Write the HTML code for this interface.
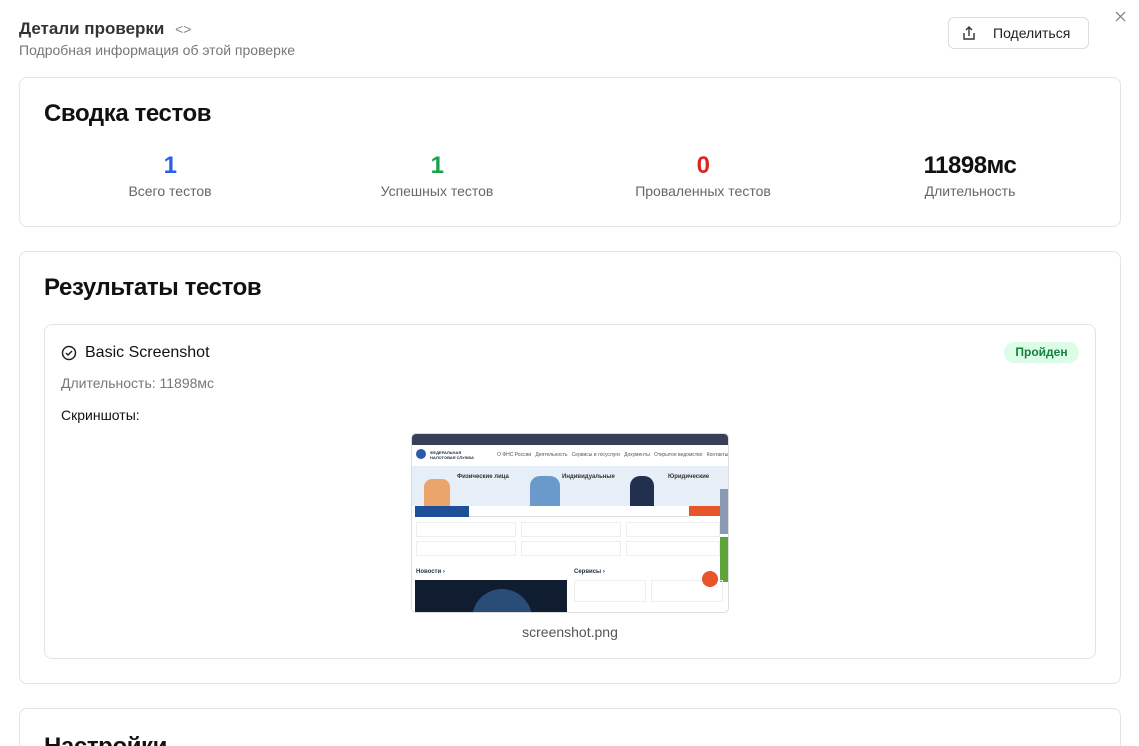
<!DOCTYPE html>
<html style="height:746px;overflow:hidden"><head><meta charset="utf-8"><style>
*{box-sizing:border-box;margin:0;padding:0}
body{width:1139px;height:746px;overflow:hidden;background:#fff;font-family:"Liberation Sans",sans-serif;color:#111;position:relative}
.abs{position:absolute}
.card{position:absolute;left:19px;width:1102px;border:1px solid #e4e4e7;border-radius:8px;background:#fff}
.stat{position:absolute;top:151px;width:250px;text-align:center}
.stat b{display:block;font-size:24px;font-weight:700;line-height:30px;letter-spacing:-0.5px}
.stat span{display:block;font-size:14px;color:#666;margin-top:2px}
.t{font-size:5px;color:#556;position:absolute;white-space:nowrap}
h2{position:absolute;font-size:24px;font-weight:700;letter-spacing:-0.4px}
</style></head><body>
<div class="abs" style="left:19px;top:19px;font-size:17px;font-weight:700;color:#333">Детали проверки <span style="font-weight:400;color:#888;font-size:14px;margin-left:6px">&lt;&gt;</span></div>
<div class="abs" style="left:19px;top:42px;font-size:14px;color:#777">Подробная информация об этой проверке</div>
<div class="abs" style="left:948px;top:17px;width:141px;height:32px;border:1px solid #ddd;border-radius:6px;font-size:14px;color:#222;line-height:30px;padding-left:44px">Поделиться
<svg class="abs" style="left:13px;top:8px" width="14" height="15" viewBox="0 0 14 15" fill="none" stroke="#333" stroke-width="1.4"><path d="M7 10V1M4 4l3-3 3 3M2 7v6h10V7"/></svg></div>
<svg class="abs" style="left:1115px;top:11px" width="11" height="11" viewBox="0 0 11 11" stroke="#777" stroke-width="1.2"><path d="M1 1l9 9M10 1l-9 9"/></svg>

<div class="card" style="top:77px;height:150px"></div>
<h2 style="left:44px;top:100px">Сводка тестов</h2>
<div class="stat" style="left:45px"><b style="color:#2563eb">1</b><span>Всего тестов</span></div>
<div class="stat" style="left:312px"><b style="color:#16a34a">1</b><span>Успешных тестов</span></div>
<div class="stat" style="left:578px"><b style="color:#dc2626">0</b><span>Проваленных тестов</span></div>
<div class="stat" style="left:845px"><b>11898мс</b><span>Длительность</span></div>

<div class="card" style="top:251px;height:433px"></div>
<h2 style="left:44px;top:274px">Результаты тестов</h2>
<div class="abs" style="left:44px;top:324px;width:1052px;height:335px;border:1px solid #e4e4e7;border-radius:8px"></div>
<svg class="abs" style="left:61px;top:345px" width="16" height="16" viewBox="0 0 16 16" fill="none" stroke="#222" stroke-width="1.5"><circle cx="8" cy="8" r="6.5"/><path d="M5 8l2 2 4-4"/></svg>
<div class="abs" style="left:85px;top:344px;font-size:16px">Basic Screenshot</div>
<div class="abs" style="left:1004px;top:342px;width:75px;height:21px;border-radius:11px;background:#dcfce7;color:#15803d;font-size:12px;font-weight:700;text-align:center;line-height:21px">Пройден</div>
<div class="abs" style="left:61px;top:375px;font-size:14px;color:#777">Длительность: 11898мс</div>
<div class="abs" style="left:61px;top:407px;font-size:14px">Скриншоты:</div>

<div class="abs" style="left:411px;top:433px;width:318px;height:180px;border-radius:5px;overflow:hidden;border:1px solid #ddd;background:#fff">
 <div class="abs" style="left:0;top:0;width:318px;height:11px;background:#3a3f58"></div>
 <div class="abs" style="left:4px;top:15px;width:10px;height:10px;border-radius:50%;background:#2a5caa"></div>
 <div class="t" style="left:18px;top:16px;font-weight:700;color:#234;font-size:4px">ФЕДЕРАЛЬНАЯ<br>НАЛОГОВАЯ СЛУЖБА</div>
 <div class="t" style="left:85px;top:18px">О ФНС России &nbsp; Деятельность &nbsp; Сервисы и госуслуги &nbsp; Документы &nbsp; Открытое ведомство &nbsp; Контакты</div>
 <div class="abs" style="left:0;top:32px;width:318px;height:40px;background:#e6eef8"></div>
 <div class="abs" style="left:12px;top:45px;width:26px;height:27px;background:#e9a56a;border-radius:8px 8px 0 0"></div>
 <div class="abs" style="left:118px;top:42px;width:30px;height:30px;background:#6a9acb;border-radius:10px 10px 0 0"></div>
 <div class="abs" style="left:218px;top:42px;width:24px;height:30px;background:#223050;border-radius:10px 10px 0 0"></div>
 <div class="t" style="left:45px;top:40px;font-size:6px;font-weight:700;color:#333">Физические лица</div>
 <div class="t" style="left:150px;top:40px;font-size:6px;font-weight:700;color:#333">Индивидуальные</div>
 <div class="t" style="left:256px;top:40px;font-size:6px;font-weight:700;color:#333">Юридические</div>
 <div class="abs" style="left:3px;top:72px;width:54px;height:11px;background:#1f4f98"></div>
 <div class="abs" style="left:57px;top:72px;width:220px;height:11px;background:#fff;border-bottom:1px solid #ddd"></div>
 <div class="abs" style="left:277px;top:72px;width:36px;height:10px;background:#e8552a"></div>
 <div class="abs" style="left:308px;top:55px;width:10px;height:45px;background:#8a9ab0"></div>
 <div class="abs" style="left:308px;top:103px;width:10px;height:45px;background:#5fa33b"></div>
 <div class="abs" style="left:4px;top:88px;width:100px;height:15px;border:1px solid #eee"></div>
 <div class="abs" style="left:109px;top:88px;width:100px;height:15px;border:1px solid #eee"></div>
 <div class="abs" style="left:214px;top:88px;width:94px;height:15px;border:1px solid #eee"></div>
 <div class="abs" style="left:4px;top:107px;width:100px;height:15px;border:1px solid #eee"></div>
 <div class="abs" style="left:109px;top:107px;width:100px;height:15px;border:1px solid #eee"></div>
 <div class="abs" style="left:214px;top:107px;width:94px;height:15px;border:1px solid #eee"></div>
 <div class="t" style="left:4px;top:135px;font-size:6px;font-weight:700;color:#234">Новости ›</div>
 <div class="t" style="left:162px;top:135px;font-size:6px;font-weight:700;color:#234">Сервисы ›</div>
 <div class="abs" style="left:3px;top:146px;width:152px;height:34px;background:#101c30"></div>
 <div class="abs" style="left:60px;top:155px;width:60px;height:60px;border-radius:50%;background:#2a4d78"></div>
 <div class="abs" style="left:162px;top:146px;width:72px;height:22px;border:1px solid #eee"></div>
 <div class="abs" style="left:239px;top:146px;width:72px;height:22px;border:1px solid #eee"></div>
 <div class="abs" style="left:290px;top:137px;width:16px;height:16px;border-radius:50%;background:#e8552a"></div>
</div>
<div class="abs" style="left:411px;top:624px;width:318px;text-align:center;font-size:14px;color:#555">screenshot.png</div>

<div class="card" style="top:708px;height:60px"></div>
<h2 style="left:44px;top:733px">Настройки</h2>
</body></html>
